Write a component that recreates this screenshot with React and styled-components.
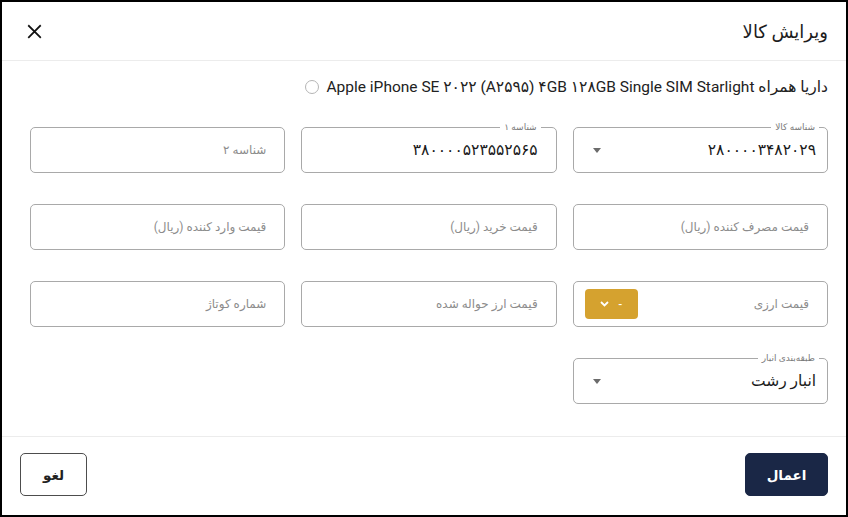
import styled, { createGlobalStyle } from 'styled-components';

const GlobalStyle = createGlobalStyle`
  * { box-sizing: border-box; }
  body {
    margin: 0;
    background: #fff;
    font-family: "Roboto", "DejaVu Sans", sans-serif;
  }
`;

const Frame = styled.div`
  width: 848px;
  height: 517px;
  border: 2px solid #000;
  background: #fff;
  display: flex;
  flex-direction: column;
  direction: rtl;
`;

const Header = styled.div`
  height: 59px;
  flex: none;
  display: flex;
  align-items: center;
  justify-content: space-between;
  padding: 0 18px 0 24px;
  border-bottom: 1px solid #ececec;
`;

const Title = styled.h2`
  margin: 0;
  font-size: 18px;
  font-weight: 500;
  color: #1c1c1c;
`;

const CloseButton = styled.button`
  border: none;
  background: none;
  padding: 0;
  width: 16px;
  height: 16px;
  display: flex;
  align-items: center;
  justify-content: center;
  cursor: pointer;
`;

const Body = styled.div`
  flex: 1;
  padding: 16px 18px 0 28px;
  border-bottom: 1px solid #ececec;
`;

const ProductLine = styled.label`
  display: flex;
  align-items: center;
  gap: 8px;
  height: 20px;
  font-size: 15.5px;
  color: #222;
  margin-bottom: 30px;
`;

const Radio = styled.span`
  width: 14px;
  height: 14px;
  border-radius: 50%;
  border: 1px solid #b5b5b5;
  flex: none;
`;

const Grid = styled.div`
  display: grid;
  grid-template-columns: repeat(3, 1fr);
  column-gap: 16px;
  row-gap: 31px;
`;

const Field = styled.div`
  position: relative;
  height: 46px;
  border: 1px solid #a9a9a9;
  border-radius: 5px;
  display: flex;
  align-items: center;
  justify-content: space-between;
  padding: 0 ${(p) => p.$pad || 18}px 0 12px;
`;

const Legend = styled.span`
  position: absolute;
  top: -7px;
  right: ${(p) => p.$right || 15}px;
  padding: 0 4px;
  background: #fff;
  font-size: 9px;
  line-height: 12px;
  color: #7a7a7a;
`;

const Value = styled.span`
  font-size: 15.5px;
  color: #1a1a1a;
`;

const Placeholder = styled.span`
  font-size: 12px;
  color: #8c8c8c;
`;

const Arrow = styled.span`
  width: 0;
  height: 0;
  margin-left: 7px;
  border-left: 4.5px solid transparent;
  border-right: 4.5px solid transparent;
  border-top: 5px solid #6b6b6b;
`;

const CurrencyButton = styled.button`
  width: 53px;
  height: 30px;
  border: none;
  border-radius: 4px;
  background: #d5a22f;
  display: flex;
  align-items: center;
  justify-content: center;
  gap: 9px;
  color: #fff;
  font-size: 12px;
  margin-left: -1px;
  cursor: pointer;
`;

const Footer = styled.div`
  height: 78px;
  flex: none;
  display: flex;
  align-items: flex-start;
  justify-content: space-between;
  padding: 16px 18px 0 18px;
`;

const Button = styled.button`
  height: 43px;
  min-width: ${(p) => (p.$primary ? 83 : 67)}px;
  border-radius: 5px;
  border: 1px solid ${(p) => (p.$primary ? '#1a2746' : '#4d4d4d')};
  background: ${(p) => (p.$primary ? '#1a2746' : '#fff')};
  color: ${(p) => (p.$primary ? '#fff' : '#222')};
  font-family: "DejaVu Sans", sans-serif;
  font-size: 13.5px;
  font-weight: 700;
  cursor: pointer;
`;

const CloseIcon = () => (
  <svg width="15" height="15" viewBox="0 0 16 16">
    <path d="M2 2L14 14M14 2L2 14" stroke="#111" strokeWidth="1.9" strokeLinecap="square" />
  </svg>
);

const Chevron = () => (
  <svg width="9" height="6" viewBox="0 0 9 6">
    <path d="M1 1l3.5 3.5L8 1" stroke="#fff" strokeWidth="1.8" fill="none" />
  </svg>
);

const fields = [
  { legend: 'شناسه کالا', value: '۲۸۰۰۰۰۳۴۸۲۰۲۹', select: true, pad: 11, right: 8 },
  { legend: 'شناسه ۱', value: '۳۸۰۰۰۰۵۲۳۵۵۲۵۶۵' },
  { placeholder: 'شناسه ۲' },
  { placeholder: 'قیمت مصرف کننده (ریال)' },
  { placeholder: 'قیمت خرید (ریال)' },
  { placeholder: 'قیمت وارد کننده (ریال)' },
  { placeholder: 'قیمت ارزی', currency: true },
  { placeholder: 'قیمت ارز حواله شده' },
  { placeholder: 'شماره کوتاژ' },
  { legend: 'طبقه‌بندی انبار', value: 'انبار رشت', select: true, pad: 11, right: 8 },
];

const App = () => {
  return (
    <>
      <GlobalStyle />
      <Frame>
        <Header>
          <Title>ویرایش کالا</Title>
          <CloseButton type="button">
            <CloseIcon />
          </CloseButton>
        </Header>
        <Body>
          <ProductLine>
            <span>داریا همراه Apple iPhone SE ۲۰۲۲ (A۲۵۹۵) ۴GB ۱۲۸GB Single SIM Starlight</span>
            <Radio />
          </ProductLine>
          <Grid>
            {fields.map((f, i) => (
              <Field key={i} $pad={f.pad}>
                {f.legend && <Legend $right={f.right}>{f.legend}</Legend>}
                {f.value ? <Value>{f.value}</Value> : <Placeholder>{f.placeholder}</Placeholder>}
                {f.select && <Arrow />}
                {f.currency && (
                  <CurrencyButton type="button">
                    <span>-</span>
                    <Chevron />
                  </CurrencyButton>
                )}
              </Field>
            ))}
          </Grid>
        </Body>
        <Footer>
          <Button type="button" $primary>اعمال</Button>
          <Button type="button">لغو</Button>
        </Footer>
      </Frame>
    </>
  );
};

export default App;
